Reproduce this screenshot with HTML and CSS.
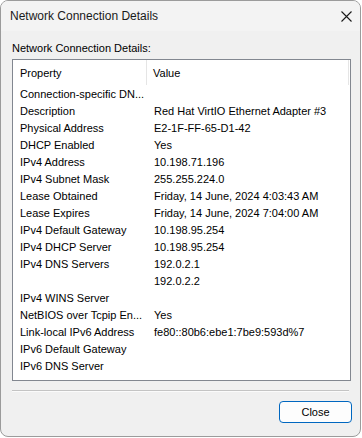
FILE: index.html
```html
<!DOCTYPE html>
<html lang="en">
<head>
    <meta charset="UTF-8">
    <title>Network Connection Details</title>
    <link rel="stylesheet" href="styles.css">
</head>
<body>
    <div class="window">
        <div class="titlebar">
            <span class="title">Network Connection Details</span>
            <svg class="close-x" width="11" height="11" viewBox="0 0 11 11">
                <path d="M0.5 0.5 L10.5 10.5 M10.5 0.5 L0.5 10.5" stroke="#1a1a1a" stroke-width="1.1" fill="none"/>
            </svg>
        </div>

        <div class="content">
            <div class="label">Network Connection Details:</div>
            <div class="listview">
                <div class="header">
                    <div class="col prop">Property</div>
                    <div class="col val">Value</div>
                    <div class="header-end"></div>
                </div>
                <div class="rows">
                    <div class="row"><span class="prop">Connection-specific DN...</span><span class="val"></span></div>
                    <div class="row"><span class="prop">Description</span><span class="val">Red Hat VirtIO Ethernet Adapter #3</span></div>
                    <div class="row"><span class="prop">Physical Address</span><span class="val">E2-1F-FF-65-D1-42</span></div>
                    <div class="row"><span class="prop">DHCP Enabled</span><span class="val">Yes</span></div>
                    <div class="row"><span class="prop">IPv4 Address</span><span class="val">10.198.71.196</span></div>
                    <div class="row"><span class="prop">IPv4 Subnet Mask</span><span class="val">255.255.224.0</span></div>
                    <div class="row"><span class="prop">Lease Obtained</span><span class="val">Friday, 14 June, 2024 4:03:43 AM</span></div>
                    <div class="row"><span class="prop">Lease Expires</span><span class="val">Friday, 14 June, 2024 7:04:00 AM</span></div>
                    <div class="row"><span class="prop">IPv4 Default Gateway</span><span class="val">10.198.95.254</span></div>
                    <div class="row"><span class="prop">IPv4 DHCP Server</span><span class="val">10.198.95.254</span></div>
                    <div class="row"><span class="prop">IPv4 DNS Servers</span><span class="val">192.0.2.1</span></div>
                    <div class="row"><span class="prop"></span><span class="val">192.0.2.2</span></div>
                    <div class="row"><span class="prop">IPv4 WINS Server</span><span class="val"></span></div>
                    <div class="row"><span class="prop">NetBIOS over Tcpip En...</span><span class="val">Yes</span></div>
                    <div class="row"><span class="prop">Link-local IPv6 Address</span><span class="val">fe80::80b6:ebe1:7be9:593d%7</span></div>
                    <div class="row"><span class="prop">IPv6 Default Gateway</span><span class="val"></span></div>
                    <div class="row"><span class="prop">IPv6 DNS Server</span><span class="val"></span></div>
                </div>
            </div>
            <div class="separator"></div>
            <div class="buttons">
                <button class="btn">Close</button>
            </div>
        </div>
    </div>
</body>
</html>
```

FILE: styles.css
```css
* {
    box-sizing: border-box;
    margin: 0;
    padding: 0;
}

body {
    background: #ffffff;
    font-family: 'Liberation Sans', Arial, sans-serif;
    font-size: 11px;
    color: #000;
}

.window {
    width: 361px;
    height: 437px;
    background: #f0f0f0;
    border: 1px solid #9b9b9b;
    border-radius: 8px;
    overflow: hidden;
    display: flex;
    flex-direction: column;
}

.titlebar {
    height: 30px;
    background: #f3f3f3;
    display: flex;
    align-items: center;
    justify-content: space-between;
    padding: 0 8px 0 9px;
}

.title {
    font-size: 12px;
    color: #1a1a1a;
}

.close-x {
    display: block;
    margin-top: 1px;
}

.content {
    padding: 10px 9px 0 11px;
    display: flex;
    flex-direction: column;
}

.label {
    line-height: 15px;
    height: 15px;
    margin-bottom: 3px;
}

.listview {
    width: 339px;
    height: 322px;
    background: #fff;
    border: 1px solid #828790;
}

.header {
    height: 25px;
    display: flex;
    align-items: center;
}

.header .col {
    height: 100%;
    display: flex;
    align-items: center;
}

.header .prop {
    width: 134px;
    padding-left: 7px;
    border-right: 1px solid #e5e5e5;
}

.header .val {
    flex: 1;
    padding-left: 6px;
}

.header-end {
    width: 1px;
    height: 100%;
    background: #e5e5e5;
    margin-right: 1px;
}

.row {
    height: 17px;
    display: flex;
    align-items: center;
    white-space: nowrap;
}

.row .prop {
    width: 141px;
    padding-left: 7px;
    overflow: hidden;
}

.row .val {
    flex: 1;
}

.separator {
    width: 337px;
    margin-top: 9px;
    border-top: 1px solid #c4c4c4;
    border-bottom: 1px solid #fbfbfb;
}

.buttons {
    display: flex;
    justify-content: flex-end;
    padding-top: 9px;
}

.btn {
    width: 73px;
    height: 22px;
    margin-right: -1px;
    background: #fdfdfd;
    border: 1px solid #0067c0;
    border-radius: 4px;
    font-family: 'Liberation Sans', Arial, sans-serif;
    font-size: 11px;
    color: #000;
}
```
